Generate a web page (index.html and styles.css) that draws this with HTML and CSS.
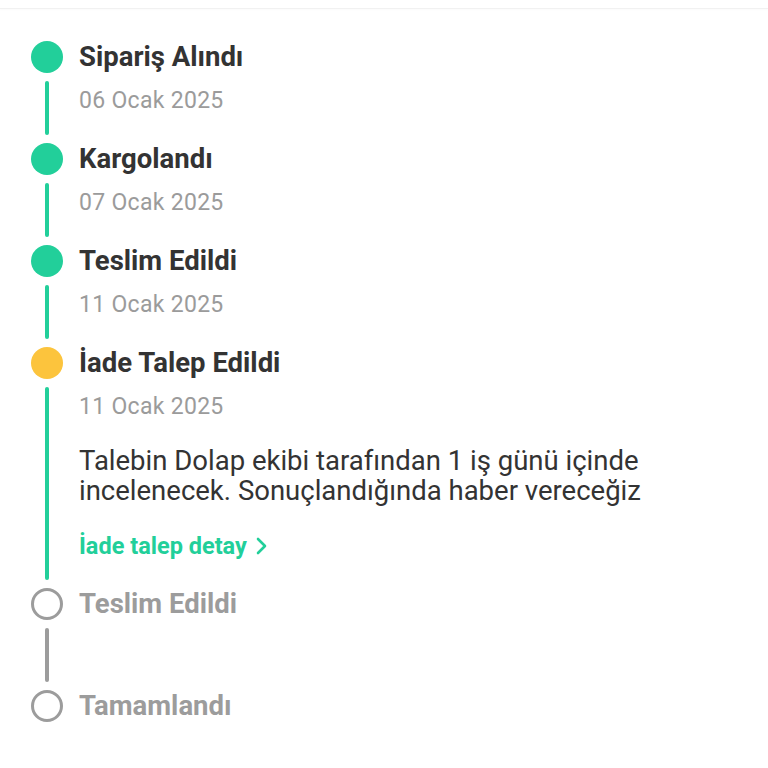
FILE: index.html
```html
<!DOCTYPE html>
<html lang="tr">
<head>
<meta charset="utf-8">
<link rel="stylesheet" href="styles.css">
</head>
<body>
<div class="topbar"></div>
<div class="timeline">
  <div class="step">
    <div class="rail"><span class="dot done"></span><span class="line done"></span></div>
    <div class="content">
      <div class="title">Sipariş Alındı</div>
      <div class="date">06 Ocak 2025</div>
    </div>
  </div>
  <div class="step">
    <div class="rail"><span class="dot done"></span><span class="line done"></span></div>
    <div class="content">
      <div class="title">Kargolandı</div>
      <div class="date">07 Ocak 2025</div>
    </div>
  </div>
  <div class="step">
    <div class="rail"><span class="dot done"></span><span class="line done"></span></div>
    <div class="content">
      <div class="title">Teslim Edildi</div>
      <div class="date">11 Ocak 2025</div>
    </div>
  </div>
  <div class="step">
    <div class="rail"><span class="dot current"></span><span class="line done"></span></div>
    <div class="content">
      <div class="title">İade Talep Edildi</div>
      <div class="date">11 Ocak 2025</div>
      <div class="desc">Talebin Dolap ekibi tarafından 1 iş günü içinde incelenecek. Sonuçlandığında haber vereceğiz</div>
      <a class="link" href="#">İade talep detay
        <svg class="chev" width="12" height="20" viewBox="0 0 12 20"><polyline points="2,3 9,10 2,17" fill="none" stroke="#22cf9a" stroke-width="2.6" stroke-linecap="round" stroke-linejoin="round"/></svg>
      </a>
    </div>
  </div>
  <div class="step pending tall">
    <div class="rail"><span class="dot todo"></span><span class="line todo"></span></div>
    <div class="content">
      <div class="title">Teslim Edildi</div>
    </div>
  </div>
  <div class="step pending last">
    <div class="rail"><span class="dot todo"></span></div>
    <div class="content">
      <div class="title">Tamamlandı</div>
    </div>
  </div>
</div>
</body>
</html>
```
FILE: styles.css
```css
html, body {
  margin: 0;
  padding: 0;
  background: #ffffff;
  font-family: Roboto, "Noto Sans", "Liberation Sans", sans-serif;
}
.topbar {
  height: 8px;
  border-bottom: 1px solid #f1f1f1;
  box-shadow: 0 1px 2px rgba(0,0,0,0.02);
}
.timeline {
  padding: 32px 0 0 31px;
}
.step {
  display: flex;
  align-items: stretch;
}
.rail {
  width: 32px;
  display: flex;
  flex-direction: column;
  align-items: center;
  flex-shrink: 0;
}
.dot {
  width: 32px;
  height: 32px;
  border-radius: 50%;
  box-sizing: border-box;
  flex-shrink: 0;
}
.dot.done { background: #22cf9a; }
.dot.current { background: #fcc43d; }
.dot.todo { border: 3.5px solid #9c9c9c; background: #fff; }
.line {
  width: 4px;
  flex: 1;
  margin: 8px 0;
  border-radius: 2px;
}
.line.done { background: #22cf9a; }
.line.todo { background: #9c9c9c; }
.content {
  margin-left: 16px;
  padding-bottom: 28px;
}
.title {
  font-size: 27.5px;
  font-weight: 700;
  line-height: 32px;
  color: #333333;
}
.date {
  margin-top: 14px;
  font-size: 23px;
  letter-spacing: 0.3px;
  line-height: 28px;
  color: #9b9b9b;
}
.desc {
  margin-top: 25px;
  font-size: 27.5px;
  line-height: 30px;
  color: #333333;
  width: 640px;
}
.link {
  display: flex;
  align-items: center;
  gap: 9px;
  margin-top: 26px;
  font-size: 23.5px;
  line-height: 28px;
  font-weight: 700;
  color: #22cf9a;
  text-decoration: none;
}
.chev { display: block; }
.pending .title { color: #9c9c9c; }
.tall .content { padding-bottom: 70px; }
.last .content { padding-bottom: 0; }
```
